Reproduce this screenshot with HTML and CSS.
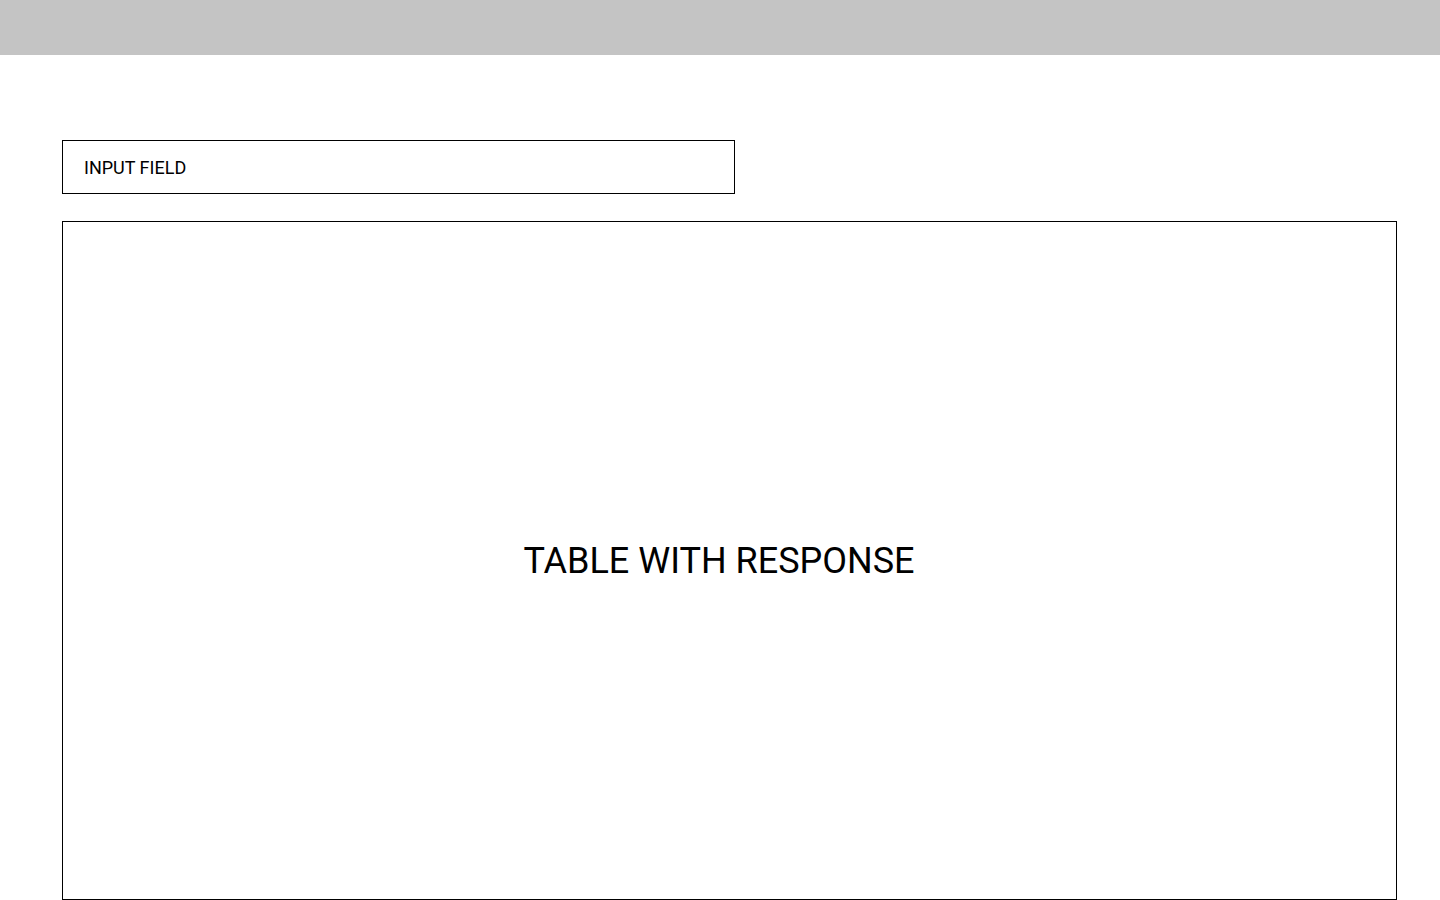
FILE: index.html
```html
<!DOCTYPE html>
<html lang="en">
<head>
    <meta charset="UTF-8">
    <meta name="viewport" content="width=device-width, initial-scale=1.0">
    <title>Document</title>
    <link rel="stylesheet" href="styles.css">
</head>
<body>
    <header class="top-bar"></header>

    <main class="content">
        <div class="input-field">INPUT FIELD</div>

        <div class="response-table">
            <p>TABLE WITH RESPONSE</p>
        </div>
    </main>
</body>
</html>
```

FILE: styles.css
```css
*, *::before, *::after{
    margin: 0;
    padding: 0;
    font-family: "Roboto", sans-serif;
    box-sizing: border-box;
}

body{
    background-color: white;
    color: black;
}
.top-bar{
    height: 55px;
    background-color: #c4c4c4;
}
.content{
    padding: 85px 43px 0 62px;
    display: flex;
    flex-direction: column;
    gap: 27px;
}
.input-field{
    width: 673px;
    height: 54px;
    border: 1px solid black;
    padding-left: 21px;
    display: flex;
    align-items: center;
    font-size: 18px;
}
.response-table{
    height: 679px;
    border: 1px solid black;
    display: flex;
    align-items: center;
    justify-content: center;
    padding-right: 21px;
}
.response-table p{
    font-size: 36px;
}
```
